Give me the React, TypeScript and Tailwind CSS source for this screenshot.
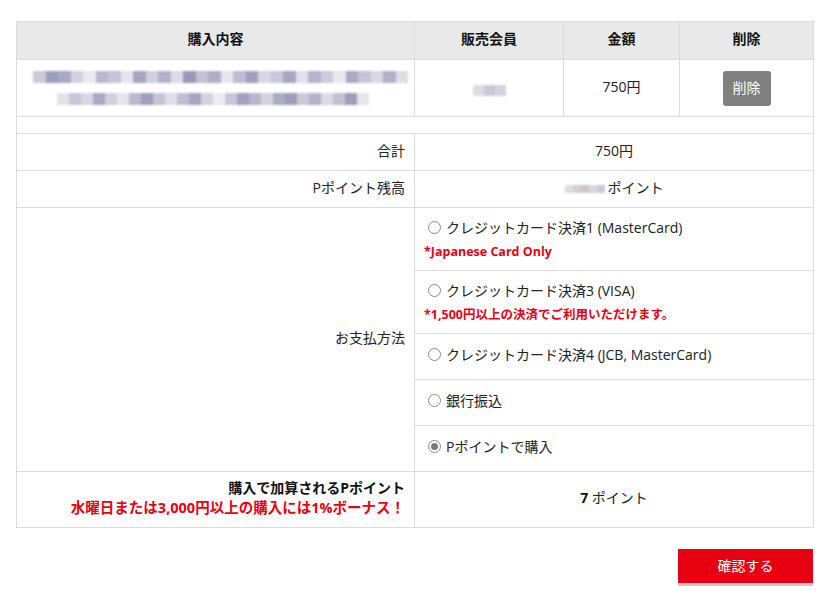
import React from "react";

const FONT = "font-['Open_Sans','Noto_Sans_CJK_JP',sans-serif]";

// pixelated placeholder colours for the masked text
const LINE_1 = [
  "#c9c9d8", "#9c9dbb", "#a8a9c3", "#d2d2de", "#e9e9ef", "#b7b8cc", "#c4c5d6", "#e4e5ec",
  "#a3a4c0", "#cfd0dd", "#b1b2c8", "#dcdce6", "#9899b9", "#c0c1d3", "#aeafc6", "#e6e6ee",
  "#bcbdd0", "#9fa0bd", "#d6d7e2", "#c8c9d8", "#a5a6c1", "#e1e1ea", "#b4b5ca", "#cbcbda",
  "#e8e8ee", "#a9aac4", "#c3c4d5", "#d9d9e4", "#b0b1c7", "#dcdde6",
];
const LINE_2 = [
  "#e2e2ea", "#c7c8d7", "#d8d8e3", "#a8a9c3", "#cfd0dd", "#e5e5ec", "#b9bacd", "#9e9fbc",
  "#c3c4d5", "#dedee8", "#bdbed1", "#a5a6c1", "#d2d3df", "#ececf1", "#c6c7d7", "#a0a1be",
  "#b6b7cb", "#d4d4e0", "#aaabc5", "#9c9dbb", "#c9c9d8", "#b3b4c9", "#dadae5", "#c0c1d3",
  "#9d9ebb", "#e4e4eb",
];

function Pixels({ colors, size = 13 }: { colors: string[]; size?: number }) {
  return (
    <div className="flex blur-[1px]">
      {colors.map((c, i) => (
        <span key={i} style={{ background: c, width: size, height: size }} />
      ))}
    </div>
  );
}

function Radio({ checked }: { checked?: boolean }) {
  return (
    <span className="inline-flex h-[13px] w-[13px] shrink-0 items-center justify-center rounded-full border border-[#8a8a8a] bg-white">
      {checked && <span className="h-[7px] w-[7px] rounded-full bg-[#7a7a7a]" />}
    </span>
  );
}

const PAYMENTS = [
  { label: "クレジットカード決済1 (MasterCard)", note: "*Japanese Card Only", h: "h-[63px]" },
  { label: "クレジットカード決済3 (VISA)", note: "*1,500円以上の決済でご利用いただけます。", h: "h-[63px]" },
  { label: "クレジットカード決済4 (JCB, MasterCard)", h: "h-[46px]" },
  { label: "銀行振込", h: "h-[46px]" },
  { label: "Pポイントで購入", checked: true, h: "h-[46px]" },
];

export default function App() {
  const border = "border border-[#dcdcdc]";
  const cell = `${border} pb-[4px]`;
  return (
    <div className={`min-h-[598px] bg-white pl-4 pt-[21px] text-[14px] text-[#222] ${FONT}`}>
      <table className="w-[797px] table-fixed border-collapse">
        <colgroup>
          <col className="w-[398px]" />
          <col className="w-[149px]" />
          <col className="w-[116px]" />
          <col className="w-[134px]" />
        </colgroup>
        <thead>
          <tr className="h-[38px] bg-[#e9e9e9] font-bold text-[#111]">
            <th className={cell}>購入内容</th>
            <th className={cell}>販売会員</th>
            <th className={cell}>金額</th>
            <th className={cell}>削除</th>
          </tr>
        </thead>
        <tbody>
          <tr className="h-[57px]">
            <td className={cell}>
              <div className="flex flex-col gap-[10px] pl-4 pt-[4px]">
                <Pixels colors={LINE_1} size={12.5} />
                <div className="pl-[24px]">
                  <Pixels colors={LINE_2} size={12} />
                </div>
              </div>
            </td>
            <td className={cell}>
              <div className="flex justify-center pt-[8px]">
                <Pixels colors={["#dcdce6", "#c9cad9", "#d3d3df"]} size={11} />
              </div>
            </td>
            <td className={`${cell} text-center`}>750円</td>
            <td className={`${cell} text-center`}>
              <button className="mt-[4px] h-[35px] w-[48px] rounded-[3px] bg-[#808080] pb-[2px] text-white">削除</button>
            </td>
          </tr>
          <tr className="h-[17px]">
            <td className={border} colSpan={4} />
          </tr>
          <tr className="h-[37px]">
            <td className={`${cell} pr-[9px] text-right`}>合計</td>
            <td className={`${cell} text-center`} colSpan={3}>750円</td>
          </tr>
          <tr className="h-[37px]">
            <td className={`${cell} pr-[9px] text-right`}>Pポイント残高</td>
            <td className={cell} colSpan={3}>
              <div className="flex items-center justify-center">
                <div className="pt-[3px]">
                  <Pixels colors={["#dcdce4", "#d0d0db", "#cfc6c0", "#d6d6df", "#c9c9d4"]} size={8} />
                </div>
                <span className="ml-[3px]">ポイント</span>
              </div>
            </td>
          </tr>
          {PAYMENTS.map((p, i) => (
            <tr key={p.label} className={p.h}>
              {i === 0 && (
                <td className={`${cell} pr-[9px] text-right`} rowSpan={PAYMENTS.length}>
                  お支払方法
                </td>
              )}
              <td className={`${p.note ? border : cell} pl-[13px]`} colSpan={3}>
                <div className="flex items-center gap-[5px]">
                  <Radio checked={p.checked} />
                  <span>{p.label}</span>
                </div>
                {p.note && (
                  <div className="-ml-[4px] mt-[5px] text-[12.5px] font-bold text-[#e60012]">{p.note}</div>
                )}
              </td>
            </tr>
          ))}
          <tr className="h-[56px]">
            <td className={`${cell} pr-[9px] text-right font-bold leading-[20px]`}>
              <div className="text-[#111]">購入で加算されるPポイント</div>
              <div className="text-[14.5px] text-[#e60012]">水曜日または3,000円以上の購入には1%ボーナス！</div>
            </td>
            <td className={`${cell} text-center`} colSpan={3}>
              <b className="text-[#111]">7</b> ポイント
            </td>
          </tr>
        </tbody>
      </table>
      <div className="mt-[21px] flex w-[797px] justify-end">
        <button className="h-[34px] w-[135px] bg-[#e60012] pb-[2px] text-[14px] text-white shadow-[0_3px_0_#c8c8c8]">
          確認する
        </button>
      </div>
    </div>
  );
}
